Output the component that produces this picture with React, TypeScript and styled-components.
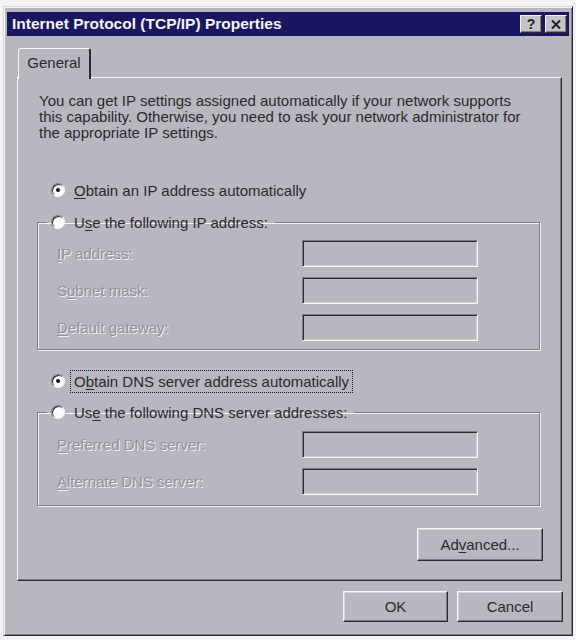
import React from "react";
import styled, { createGlobalStyle } from "styled-components";

const FACE = "#b8b7bf";
const LIGHT = "#f6f6f8";
const SHADOW = "#7d7c85";
const DARK = "#2a2a2e";
const FONT = `"Liberation Sans", Arial, sans-serif`;

const GlobalStyle = createGlobalStyle`
  html, body { margin: 0; padding: 0; background: #f3f3f3; }
  body { font-family: ${FONT}; }
  #root { width: 576px; height: 640px; overflow: hidden; }
`;

const Window = styled.div`
  box-sizing: border-box;
  width: 570px;
  height: 630px;
  margin: 6px 0 0 3px;
  background: ${FACE};
  border: 1px solid;
  border-color: #d9d8de ${DARK} ${DARK} #d9d8de;
  box-shadow: inset 1px 1px ${LIGHT}, inset -1px -1px ${SHADOW};
  padding: 5px 3px 3px 3px;
  display: flex;
  flex-direction: column;
`;

const TitleBar = styled.div`
  height: 24px;
  background: #1b1662;
  display: flex;
  align-items: center;
  padding: 0 2px 0 5px;
  color: #f4f4f8;
  font: bold 15.5px ${FONT};
`;

const TitleText = styled.span`
  flex: 1;
  white-space: nowrap;
`;

const CaptionButton = styled.div`
  box-sizing: border-box;
  width: 22px;
  height: 18px;
  background: #c4c3ca;
  border: 1px solid;
  border-color: ${LIGHT} ${DARK} ${DARK} ${LIGHT};
  box-shadow: inset -1px -1px ${SHADOW};
  display: flex;
  align-items: center;
  justify-content: center;
  color: #222;
  font: bold 14px ${FONT};
  & + & {
    margin-left: 3px;
  }
`;

const Body = styled.div`
  padding: 12px 0 0 10px;
  display: flex;
  flex-direction: column;
`;

const TabStrip = styled.div`
  display: flex;
  height: 29px;
  padding-left: 1px;
`;

const Tab = styled.div`
  position: relative;
  z-index: 1;
  box-sizing: border-box;
  width: 73px;
  height: 31px;
  background: ${FACE};
  border-top: 1px solid ${LIGHT};
  border-left: 1px solid ${LIGHT};
  border-right: 2px solid ${DARK};
  border-radius: 3px 3px 0 0;
  display: flex;
  align-items: center;
  justify-content: center;
  padding-bottom: 3px;
  font: 15px ${FONT};
  color: #2a2a2e;
`;

const Panel = styled.div`
  box-sizing: border-box;
  width: 545px;
  height: 504px;
  border: 1px solid;
  border-color: ${LIGHT} ${DARK} ${DARK} ${LIGHT};
  box-shadow: inset -1px -1px ${SHADOW};
  padding: 15px 0 0 19px;
  display: flex;
  flex-direction: column;
  color: #2a2a2e;
  font: 15px ${FONT};
`;

const Intro = styled.p`
  margin: 0 0 0 2px;
  line-height: 16px;
  white-space: nowrap;
`;

const RadioRow = styled.div<{ $top: number }>`
  display: flex;
  align-items: center;
  height: 22px;
  margin-top: ${(p) => p.$top}px;
  margin-left: 14px;
`;

const RadioDot = styled.span<{ $checked?: boolean }>`
  position: relative;
  box-sizing: border-box;
  flex: none;
  width: 14px;
  height: 14px;
  border-radius: 50%;
  background: #fbfbfc;
  border: 1px solid;
  border-color: ${SHADOW} ${LIGHT} ${LIGHT} ${SHADOW};
  box-shadow: inset 1px 1px ${DARK};
  margin-right: 6px;
  &::after {
    content: "";
    display: ${(p) => (p.$checked ? "block" : "none")};
    position: absolute;
    left: 4px;
    top: 4px;
    width: 4px;
    height: 4px;
    border-radius: 50%;
    background: #111;
  }
`;

const RadioLabel = styled.span<{ $focused?: boolean }>`
  padding: 2px 3px 2px 3px;
  outline: ${(p) => (p.$focused ? `1px dotted #222` : "none")};
  white-space: nowrap;
`;

const Acc = styled.u`
  text-decoration: underline;
  text-underline-offset: 2px;
`;

const Group = styled.fieldset<{ $top: number; $pb: number }>`
  box-sizing: border-box;
  width: 503px;
  margin: ${(p) => p.$top}px 0 0 0;
  padding: 0 0 ${(p) => p.$pb}px 13px;
  border: 1px solid ${SHADOW};
  box-shadow: inset 1px 1px ${LIGHT}, 1px 1px ${LIGHT};
  min-width: 0;
`;

const Legend = styled.legend`
  padding: 0 4px;
  margin-left: -4px;
  height: 20px;
  display: flex;
  align-items: center;
`;

const FieldGrid = styled.div<{ $top: number }>`
  display: grid;
  grid-template-columns: 245px 176px;
  row-gap: 10px;
  align-items: center;
  margin: ${(p) => p.$top}px 0 0 6px;
`;

const DisabledLabel = styled.span`
  color: #93929b;
  text-shadow: 1px 1px 0 #f2f2f5;
  white-space: nowrap;
`;

const DisabledInput = styled.div`
  box-sizing: border-box;
  height: 27px;
  background: ${FACE};
  border: 1px solid;
  border-color: ${SHADOW} ${LIGHT} ${LIGHT} ${SHADOW};
  box-shadow: inset 1px 1px ${DARK}, inset -1px -1px #cfced4;
`;

const PushButton = styled.button<{ $w: number; $h: number }>`
  box-sizing: border-box;
  width: ${(p) => p.$w}px;
  height: ${(p) => p.$h}px;
  padding: 0;
  background: ${FACE};
  border: 1px solid;
  border-color: ${LIGHT} ${DARK} ${DARK} ${LIGHT};
  box-shadow: inset -1px -1px ${SHADOW}, inset 1px 1px #d6d5db;
  font: 15px ${FONT};
  color: #2a2a2e;
`;

const AdvancedRow = styled.div`
  display: flex;
  justify-content: flex-end;
  margin: 22px 18px 0 0;
`;

const ButtonRow = styled.div`
  display: flex;
  justify-content: flex-end;
  gap: 9px;
  margin-top: 10px;
  padding-right: 6px;
`;

function Radio({
  checked,
  focused,
  children,
}: {
  checked?: boolean;
  focused?: boolean;
  children: React.ReactNode;
}) {
  return (
    <>
      <RadioDot $checked={checked} />
      <RadioLabel $focused={focused}>{children}</RadioLabel>
    </>
  );
}

export default function App() {
  return (
    <>
      <GlobalStyle />
      <Window>
        <TitleBar>
          <TitleText>Internet Protocol (TCP/IP) Properties</TitleText>
          <CaptionButton>?</CaptionButton>
          <CaptionButton>
            <svg width="10" height="9" viewBox="0 0 10 9">
              <path d="M1 0.5 L9 8.5 M9 0.5 L1 8.5" stroke="#222" strokeWidth="2" />
            </svg>
          </CaptionButton>
        </TitleBar>
        <Body>
          <TabStrip>
            <Tab>General</Tab>
          </TabStrip>
          <Panel>
            <Intro>
              You can get IP settings assigned automatically if your network supports
              <br />
              this capability. Otherwise, you need to ask your network administrator for
              <br />
              the appropriate IP settings.
            </Intro>
            <RadioRow $top={38}>
              <Radio checked>
                <Acc>O</Acc>btain an IP address automatically
              </Radio>
            </RadioRow>
            <Group $top={11} $pb={8}>
              <Legend>
                <Radio>
                  U<Acc>s</Acc>e the following IP address:
                </Radio>
              </Legend>
              <FieldGrid $top={8}>
                <DisabledLabel>
                  <Acc>I</Acc>P address:
                </DisabledLabel>
                <DisabledInput />
                <DisabledLabel>
                  S<Acc>u</Acc>bnet mask:
                </DisabledLabel>
                <DisabledInput />
                <DisabledLabel>
                  <Acc>D</Acc>efault gateway:
                </DisabledLabel>
                <DisabledInput />
              </FieldGrid>
            </Group>
            <RadioRow $top={20}>
              <Radio checked focused>
                O<Acc>b</Acc>tain DNS server address automatically
              </Radio>
            </RadioRow>
            <Group $top={10} $pb={10}>
              <Legend>
                <Radio>
                  Us<Acc>e</Acc> the following DNS server addresses:
                </Radio>
              </Legend>
              <FieldGrid $top={9}>
                <DisabledLabel>
                  <Acc>P</Acc>referred DNS server:
                </DisabledLabel>
                <DisabledInput />
                <DisabledLabel>
                  <Acc>A</Acc>lternate DNS server:
                </DisabledLabel>
                <DisabledInput />
              </FieldGrid>
            </Group>
            <AdvancedRow>
              <PushButton $w={126} $h={33}>
                Ad<Acc>v</Acc>anced...
              </PushButton>
            </AdvancedRow>
          </Panel>
          <ButtonRow>
            <PushButton $w={105} $h={31}>
              OK
            </PushButton>
            <PushButton $w={106} $h={31}>
              Cancel
            </PushButton>
          </ButtonRow>
        </Body>
      </Window>
    </>
  );
}
